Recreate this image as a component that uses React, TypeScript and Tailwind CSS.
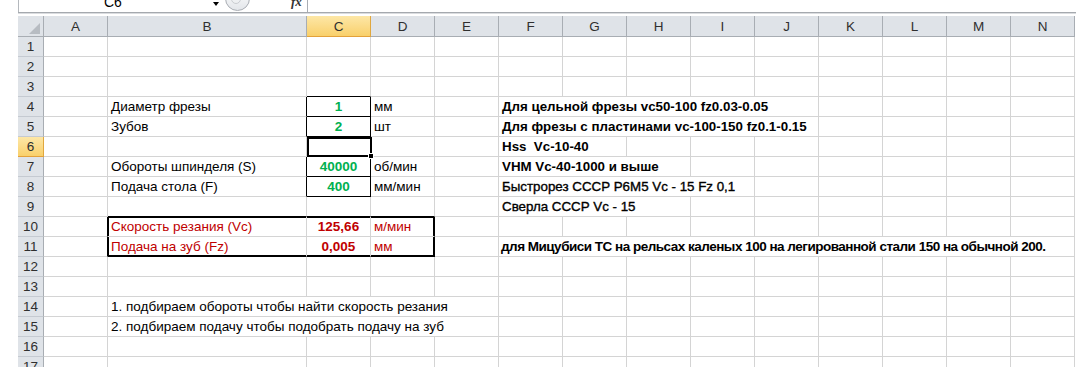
import React from "react";

type Kind = "label" | "labelRed" | "green" | "red" | "unit" | "unitRed" | "note" | "noteThin" | "noteCal";

interface CellData {
  text: string;
  kind: Kind;
  span?: number;
}

const COLS = [
  { k: "A", w: 64 },
  { k: "B", w: 199 },
  { k: "C", w: 64 },
  { k: "D", w: 64 },
  { k: "E", w: 64 },
  { k: "F", w: 64 },
  { k: "G", w: 64 },
  { k: "H", w: 64 },
  { k: "I", w: 64 },
  { k: "J", w: 64 },
  { k: "K", w: 64 },
  { k: "L", w: 64 },
  { k: "M", w: 64 },
  { k: "N", w: 64 },
];

const DATA: Record<number, Record<string, CellData>> = {
  4: {
    B: { text: "Диаметр фрезы", kind: "label" },
    C: { text: "1", kind: "green" },
    D: { text: "мм", kind: "unit" },
    F: { text: "Для цельной фрезы vc50-100 fz0.03-0.05", kind: "note", span: 5 },
  },
  5: {
    B: { text: "Зубов", kind: "label" },
    C: { text: "2", kind: "green" },
    D: { text: "шт", kind: "unit" },
    F: { text: "Для фрезы с пластинами vc-100-150 fz0.1-0.15", kind: "note", span: 5 },
  },
  6: {
    F: { text: "Hss  Vc-10-40", kind: "note", span: 2 },
  },
  7: {
    B: { text: "Обороты шпинделя (S)", kind: "label" },
    C: { text: "40000", kind: "green" },
    D: { text: "об/мин", kind: "unit" },
    F: { text: "VHM Vc-40-1000 и выше", kind: "note", span: 3 },
  },
  8: {
    B: { text: "Подача стола (F)", kind: "label" },
    C: { text: "400", kind: "green" },
    D: { text: "мм/мин", kind: "unit" },
    F: { text: "Быстрорез СССР P6M5 Vc - 15 Fz 0,1", kind: "noteThin", span: 4 },
  },
  9: {
    F: { text: "Сверла СССР Vc - 15", kind: "noteThin", span: 3 },
  },
  10: {
    B: { text: "Скорость резания (Vc)", kind: "labelRed" },
    C: { text: "125,66", kind: "red" },
    D: { text: "м/мин", kind: "unitRed" },
  },
  11: {
    B: { text: "Подача на зуб (Fz)", kind: "labelRed" },
    C: { text: "0,005", kind: "red" },
    D: { text: "мм", kind: "unitRed" },
    F: {
      text: "для Мицубиси ТС на рельсах каленых 100 на легированной стали 150 на обычной 200.",
      kind: "noteCal",
      span: 9,
    },
  },
  14: {
    B: { text: "1. подбираем обороты чтобы найти скорость резания", kind: "label", span: 4 },
  },
  15: {
    B: { text: "2. подбираем подачу чтобы подобрать подачу на зуб", kind: "label", span: 4 },
  },
};

const BLACK_RIGHT = ["B4", "B5", "B7", "B8", "C4", "C5", "C6", "C7", "C8", "A10", "A11", "D10", "D11"];
const BLACK_BOTTOM = ["C3", "C4", "C5", "C6", "C7", "C8", "B9", "C9", "D9", "B11", "C11", "D11"];

const SHADOWS: Record<string, string> = {
  B10: "shadow-[inset_1px_1px_0_#000]",
  C10: "shadow-[inset_0_1px_0_#000]",
  D10: "shadow-[inset_-1px_1px_0_#000]",
  B11: "shadow-[inset_1px_-1px_0_#000]",
  C11: "shadow-[inset_0_-1px_0_#000]",
  D11: "shadow-[inset_-1px_-1px_0_#000]",
};

const KIND_CLS: Record<Kind, string> = {
  label: "justify-start pl-[3px] text-[13.5px] text-black",
  labelRed: "justify-start pl-[3px] text-[13.5px] text-[#c00000]",
  green: "justify-center text-[13.5px] font-bold text-[#00b050]",
  red: "justify-center text-[13.5px] font-bold text-[#c00000]",
  unit: "justify-start pl-[3px] text-[13.5px] text-black",
  unitRed: "justify-start pl-[3px] text-[13.5px] text-[#c00000]",
  note: "justify-start pl-[3px] text-[13.33px] font-bold text-black",
  noteThin: "justify-start pl-[3px] text-[13.33px] text-black [-webkit-text-stroke:0.35px_#000]",
  noteCal: "justify-start pl-[2px] text-[13.5px] font-bold tracking-[-0.5px] text-black",
};

function FormulaBar() {
  return (
    <div className="h-[16px] pl-[18px]">
      <div className="flex h-[12px] overflow-hidden border-l border-[#b4b8bd]">
        <div className="relative w-[190px] shrink-0">
          <span className="absolute left-[85px] top-[-6px] text-[14px] leading-[16px] text-black">C6</span>
        </div>
        <div className="flex w-[14px] shrink-0 justify-center pt-[2px]">
          <div className="h-0 w-0 border-x-[3.5px] border-t-[4px] border-x-transparent border-t-black" />
        </div>
        <div className="relative w-[84px] shrink-0">
          <div className="absolute left-[2px] top-[-14px] h-[25px] w-[25px] rounded-full border border-[#a9adb3] bg-gradient-to-b from-[#ffffff] to-[#e3e6ea]" />
          <div className="absolute left-[8px] top-[-8px] h-[12px] w-[10px] rounded-full border border-[#c9ccd0] bg-[#eef0f2]" />
          <span className="absolute left-[68px] top-[-5px] font-['Liberation_Serif'] text-[13px] font-bold italic leading-[14px] text-[#333]">
            fx
          </span>
        </div>
        <div className="w-px shrink-0 bg-[#a9adb3]" />
        <div className="flex-1" />
      </div>
      <div className="h-px bg-[#a5a9ae]" />
      <div className="h-px bg-[#dadcdf]" />
    </div>
  );
}

function ColumnHeader() {
  return (
    <div className="flex h-[21px]">
      <div className="flex h-[21px] w-[26px] shrink-0 items-end justify-end border-r border-b border-[#a8adb3] bg-[#dfe3e8] pr-[3px] pb-[2px]">
        <svg width="11" height="11" viewBox="0 0 11 11">
          <polygon points="11,0 11,11 0,11" fill="#b7bcc2" />
        </svg>
      </div>
      {COLS.map((c) =>
        c.k === "C" ? (
          <div
            key={c.k}
            style={{ width: c.w }}
            className="flex h-[21px] shrink-0 items-end justify-center border-r border-b border-r-[#e0a73e] border-b-[#e3a13a] bg-gradient-to-b from-[#fde7a6] to-[#f9d06a] pb-[1px] text-[13.5px] leading-[16px] text-[#2f2f2f]"
          >
            {c.k}
          </div>
        ) : (
          <div
            key={c.k}
            style={{ width: c.w }}
            className="flex h-[21px] shrink-0 items-end justify-center border-r border-b border-[#a8adb3] bg-[#dfe3e8] pb-[1px] text-[13.5px] leading-[16px] text-[#2f2f2f]"
          >
            {c.k}
          </div>
        )
      )}
    </div>
  );
}

function Cell({ col, row, width, cell }: { col: string; row: number; width: number; cell?: CellData }) {
  const id = col + row;
  const right = BLACK_RIGHT.includes(id) ? "border-r-black" : "border-r-[#d4d4d4]";
  const bottom = BLACK_BOTTOM.includes(id) ? "border-b-black" : "border-b-[#d4d4d4]";
  const shadow = SHADOWS[id] ?? "";
  const selected = id === "C6";
  return (
    <div
      style={{ width }}
      className={`relative flex h-[20px] shrink-0 items-end whitespace-pre border-r border-b pb-[1px] leading-[16px] ${right} ${bottom} ${shadow} ${
        cell ? KIND_CLS[cell.kind] : ""
      }`}
    >
      {cell?.text}
      {selected && (
        <>
          <div className="absolute left-0 top-0 z-10 h-[20px] w-[65px] border-2 border-black" />
          <div className="absolute left-[61px] top-[16px] z-20 h-[6px] w-[6px] border border-white bg-black" />
        </>
      )}
    </div>
  );
}

function Row({ row }: { row: number }) {
  const rowData = DATA[row] ?? {};
  const cells: React.ReactNode[] = [];
  for (let i = 0; i < COLS.length; i++) {
    const c = COLS[i];
    const cell = rowData[c.k];
    const span = cell?.span ?? 1;
    let width = 0;
    for (let j = i; j < i + span && j < COLS.length; j++) width += COLS[j].w;
    const lastCol = COLS[Math.min(i + span, COLS.length) - 1].k;
    cells.push(<Cell key={c.k} col={span > 1 ? lastCol : c.k} row={row} width={width} cell={cell} />);
    i += span - 1;
  }
  const hl = row === 6;
  return (
    <div className="flex h-[20px]">
      {hl ? (
        <div className="flex h-[20px] w-[26px] shrink-0 items-end justify-center border-r border-b border-r-[#e0a73e] border-b-[#e3a13a] bg-gradient-to-b from-[#fde7a6] to-[#f9d06a] pb-[1px] text-[13.5px] leading-[16px] text-[#2f2f2f]">
          {row}
        </div>
      ) : (
        <div className="flex h-[20px] w-[26px] shrink-0 items-end justify-center border-r border-b border-r-[#a8adb3] border-b-[#c5cad1] bg-[#dfe3e8] pb-[1px] text-[13.5px] leading-[16px] text-[#2f2f2f]">
          {row}
        </div>
      )}
      {cells}
    </div>
  );
}

export default function App() {
  const rows = Array.from({ length: 17 }, (_, i) => i + 1);
  return (
    <div className="h-[367px] w-[1076px] overflow-hidden bg-white font-['Liberation_Sans',Arial,sans-serif]">
      <FormulaBar />
      <div className="pl-[18px]">
        <ColumnHeader />
        {rows.map((r) => (
          <Row key={r} row={r} />
        ))}
      </div>
    </div>
  );
}
